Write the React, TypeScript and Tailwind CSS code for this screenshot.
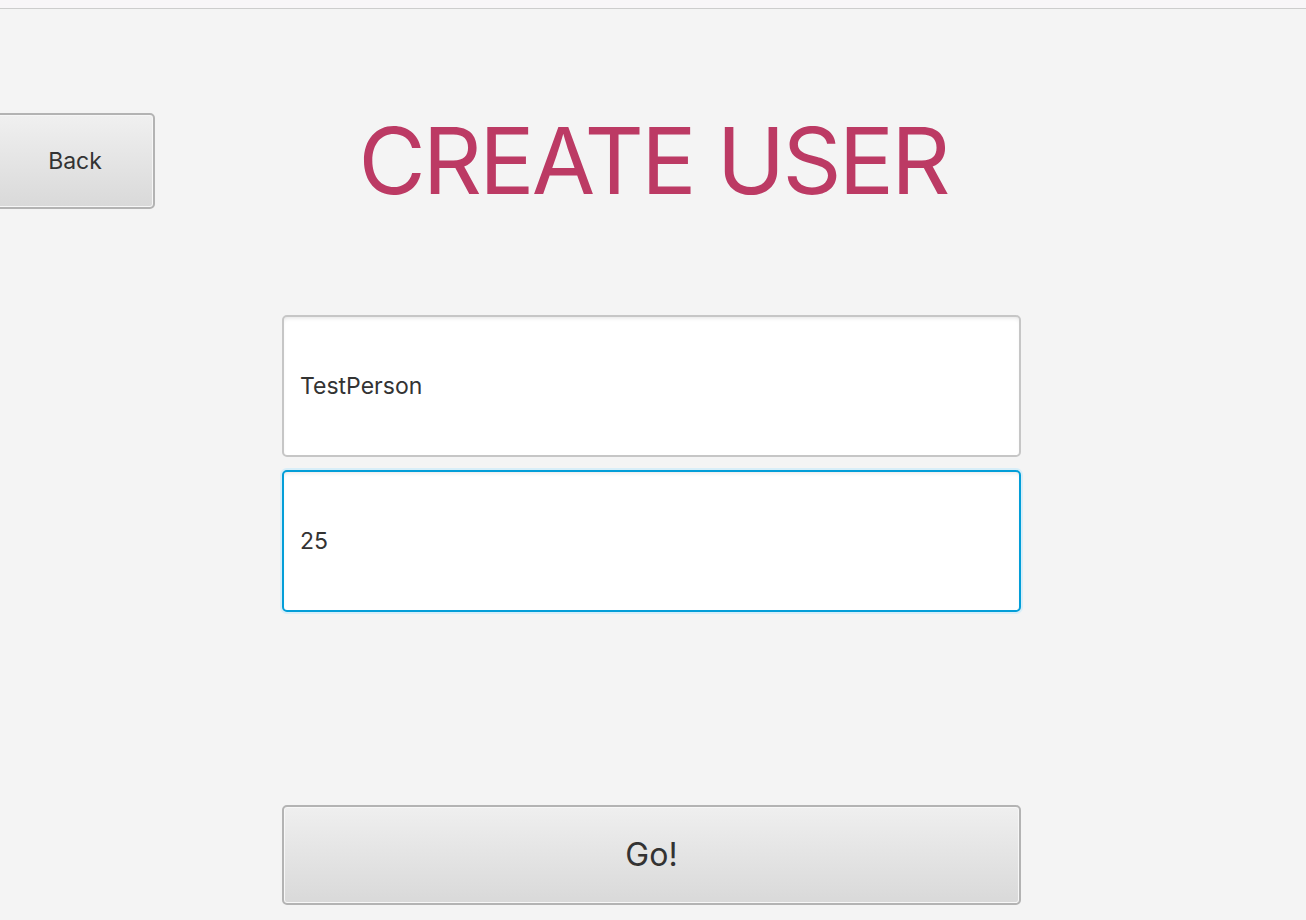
import { useState } from "react"

export default function App() {
  const [name, setName] = useState("TestPerson")
  const [age, setAge] = useState("25")

  return (
    <main
      className="relative w-screen h-screen overflow-hidden bg-[#f4f4f4] text-[#333333]"
      style={{ fontFamily: "Inter, 'Liberation Sans', sans-serif" }}
    >
      <div className="h-[9px] bg-[#f8f6f8] border-b border-[#cdcdcd]" />

      <div className="grid grid-cols-[155px_1fr_155px] items-center mt-[104px]">
        <button className="-ml-[5px] w-[160px] h-[96px] rounded-[5px] border-2 border-[#b3b3b3] bg-gradient-to-b from-[#f0f0f0] to-[#d9d9d9] shadow-[inset_0_0_0_1px_#f6f6f6] text-[23px] text-[#333333]">
          Back
        </button>
        <h1 className="text-center text-[92px] leading-none font-normal text-[#bc3a64] tracking-[-2.8px]">
          CREATE USER
        </h1>
        <div />
      </div>

      <div className="ml-[282px] w-[739px] mt-[106px] flex flex-col">
        <input
          value={name}
          onChange={(e) => setName(e.target.value)}
          className="h-[142px] rounded-[5px] border-2 border-[#c6c6c6] bg-white px-4 text-[23px] text-[#333333] outline-none shadow-[inset_0_3px_4px_-2px_#e2e2e2]"
        />
        <input
          value={age}
          onChange={(e) => setAge(e.target.value)}
          className="mt-[13px] h-[142px] rounded-[5px] border-2 border-[#039ed8] bg-white px-4 text-[23px] text-[#333333] outline-none shadow-[0_0_0_2px_#d8eef8,inset_0_3px_4px_-2px_#e6e6e6]"
        />
        <button className="mt-[193px] h-[100px] rounded-[5px] border-2 border-[#b3b3b3] bg-gradient-to-b from-[#efefef] to-[#d9d9d9] shadow-[inset_0_0_0_1px_#f7f7f7] text-[32px] text-[#333333]">
          Go!
        </button>
      </div>
    </main>
  )
}
